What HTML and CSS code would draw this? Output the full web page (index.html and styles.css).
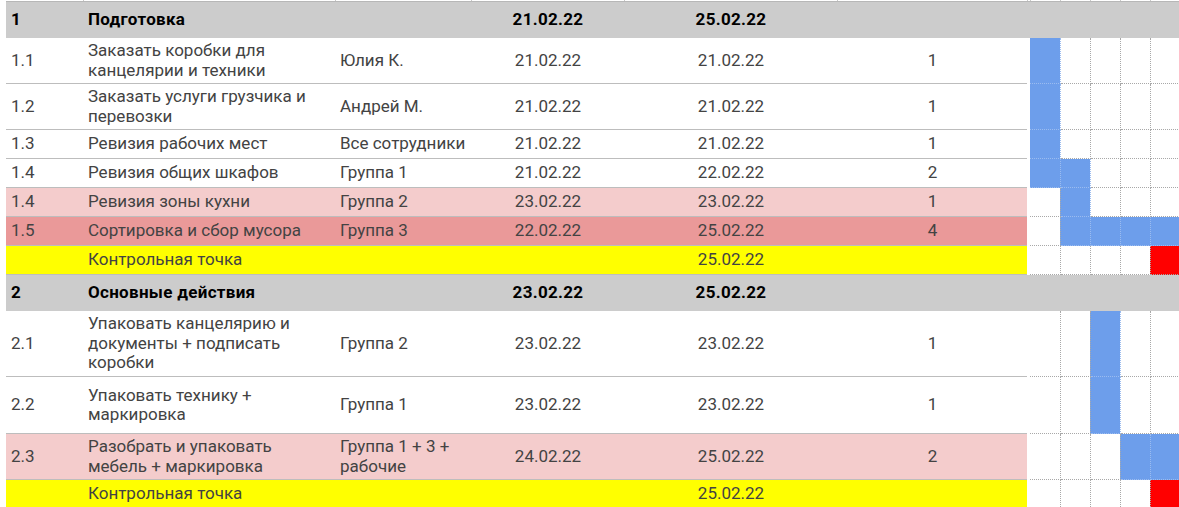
FILE: index.html
```html
<!DOCTYPE html>
<html lang="ru">
<head>
  <meta charset="UTF-8">
  <title>План переезда</title>
  <link rel="stylesheet" href="styles.css">
</head>
<body>

  <table class="plan">
    <colgroup>
      <col class="w-id">
      <col class="w-name">
      <col class="w-who">
      <col class="w-start">
      <col class="w-end">
      <col class="w-days">
      <col class="w-gap">
      <col class="w-day"><col class="w-day"><col class="w-day"><col class="w-day"><col class="w-last">
    </colgroup>

    <tr class="stub">
      <td></td><td></td><td></td><td></td><td></td><td></td><td></td>
      <td class="g"></td><td class="g"></td><td class="g"></td><td class="g"></td><td class="g"></td>
    </tr>

    <tr class="phase h36">
      <td class="id">1</td>
      <td>Подготовка</td>
      <td></td>
      <td class="num">21.02.22</td>
      <td class="num">25.02.22</td>
      <td></td>
      <td></td>
      <td class="g"></td><td class="g"></td><td class="g"></td><td class="g"></td><td class="g"></td>
    </tr>

    <tr class="task h46">
      <td class="id">1.1</td>
      <td>Заказать коробки для канцелярии и техники</td>
      <td>Юлия К.</td>
      <td class="num">21.02.22</td>
      <td class="num">21.02.22</td>
      <td class="num">1</td>
      <td class="gap"></td>
      <td class="g on"></td><td class="g"></td><td class="g"></td><td class="g"></td><td class="g"></td>
    </tr>

    <tr class="task h46">
      <td class="id">1.2</td>
      <td>Заказать услуги грузчика и перевозки</td>
      <td>Андрей М.</td>
      <td class="num">21.02.22</td>
      <td class="num">21.02.22</td>
      <td class="num">1</td>
      <td class="gap"></td>
      <td class="g on"></td><td class="g"></td><td class="g"></td><td class="g"></td><td class="g"></td>
    </tr>

    <tr class="task h29">
      <td class="id">1.3</td>
      <td>Ревизия рабочих мест</td>
      <td>Все сотрудники</td>
      <td class="num">21.02.22</td>
      <td class="num">21.02.22</td>
      <td class="num">1</td>
      <td class="gap"></td>
      <td class="g on"></td><td class="g"></td><td class="g"></td><td class="g"></td><td class="g"></td>
    </tr>

    <tr class="task h29">
      <td class="id">1.4</td>
      <td>Ревизия общих шкафов</td>
      <td>Группа 1</td>
      <td class="num">21.02.22</td>
      <td class="num">22.02.22</td>
      <td class="num">2</td>
      <td class="gap"></td>
      <td class="g on"></td><td class="g on"></td><td class="g"></td><td class="g"></td><td class="g"></td>
    </tr>

    <tr class="task risk h29">
      <td class="id">1.4</td>
      <td>Ревизия зоны кухни</td>
      <td>Группа 2</td>
      <td class="num">23.02.22</td>
      <td class="num">23.02.22</td>
      <td class="num">1</td>
      <td class="gap"></td>
      <td class="g"></td><td class="g on"></td><td class="g"></td><td class="g"></td><td class="g"></td>
    </tr>

    <tr class="task late h29">
      <td class="id">1.5</td>
      <td>Сортировка и сбор мусора</td>
      <td>Группа 3</td>
      <td class="num">22.02.22</td>
      <td class="num">25.02.22</td>
      <td class="num">4</td>
      <td class="gap"></td>
      <td class="g"></td><td class="g on"></td><td class="g on"></td><td class="g on"></td><td class="g on"></td>
    </tr>

    <tr class="task milestone h29">
      <td class="id"></td>
      <td>Контрольная точка</td>
      <td></td>
      <td></td>
      <td class="num">25.02.22</td>
      <td></td>
      <td class="gap"></td>
      <td class="g"></td><td class="g"></td><td class="g"></td><td class="g"></td><td class="g mark"></td>
    </tr>

    <tr class="phase h36">
      <td class="id">2</td>
      <td>Основные действия</td>
      <td></td>
      <td class="num">23.02.22</td>
      <td class="num">25.02.22</td>
      <td></td>
      <td></td>
      <td class="g"></td><td class="g"></td><td class="g"></td><td class="g"></td><td class="g"></td>
    </tr>

    <tr class="task h66">
      <td class="id">2.1</td>
      <td>Упаковать канцелярию и документы + подписать коробки</td>
      <td>Группа 2</td>
      <td class="num">23.02.22</td>
      <td class="num">23.02.22</td>
      <td class="num">1</td>
      <td class="gap"></td>
      <td class="g"></td><td class="g"></td><td class="g on"></td><td class="g"></td><td class="g"></td>
    </tr>

    <tr class="task h57">
      <td class="id">2.2</td>
      <td>Упаковать технику + маркировка</td>
      <td>Группа 1</td>
      <td class="num">23.02.22</td>
      <td class="num">23.02.22</td>
      <td class="num">1</td>
      <td class="gap"></td>
      <td class="g"></td><td class="g"></td><td class="g on"></td><td class="g"></td><td class="g"></td>
    </tr>

    <tr class="task risk h46">
      <td class="id">2.3</td>
      <td>Разобрать и упаковать мебель + маркировка</td>
      <td>Группа 1 + 3 + рабочие</td>
      <td class="num">24.02.22</td>
      <td class="num">25.02.22</td>
      <td class="num">2</td>
      <td class="gap"></td>
      <td class="g"></td><td class="g"></td><td class="g"></td><td class="g on"></td><td class="g on"></td>
    </tr>

    <tr class="task milestone h29">
      <td class="id"></td>
      <td>Контрольная точка</td>
      <td></td>
      <td></td>
      <td class="num">25.02.22</td>
      <td></td>
      <td class="gap"></td>
      <td class="g"></td><td class="g"></td><td class="g"></td><td class="g"></td><td class="g mark"></td>
    </tr>
  </table>

</body>
</html>
```

FILE: styles.css
```css
html, body {
  overflow: hidden;
}

body {
  margin: 0;
  padding-left: 6px;
  background-color: white;
  font-family: Roboto, "Noto Sans", sans-serif;
  font-size: 17px;
  line-height: 19.5px;
  color: #434343;
}

.plan {
  border-collapse: collapse;
  table-layout: fixed;
  width: 1173px;
}

.w-id { width: 77px; }
.w-name { width: 252px; }
.w-who { width: 136px; }
.w-start { width: 153px; }
.w-end { width: 213px; }
.w-days { width: 190px; }
.w-gap { width: 3px; }
.w-day { width: 30px; }
.w-last { width: 29px; }

td {
  padding: 0 4px 0 5px;
  vertical-align: middle;
  white-space: normal;
}

td.num {
  text-align: center;
}

/* thin line left over from the row above */
.stub td {
  height: 1px;
  padding: 0;
  border-right: 1px solid #c8c8c8;
  border-bottom: 1px solid #b7b7b7;
}

.phase td {
  background-color: #cccccc;
  color: black;
  font-weight: bold;
  letter-spacing: 0.3px;
}

.task td {
  border-bottom: 1px solid #bdbdbd;
}

.risk td {
  background-color: #f4cccc;
}

.late td {
  background-color: #ea9999;
}

.milestone td {
  background-color: #ffff00;
}

.task td.gap {
  padding: 0;
  background-color: white;
  border-bottom: none;
}

.task td.g {
  padding: 0;
  background-color: white;
  border-bottom: 1px dotted #a8a8a8;
  border-right: 1px dotted #a8a8a8;
}

.task td.g.on {
  background-color: #6d9eeb;
  border-color: #9bbcf0;
}

.task td.g.mark {
  background-color: #ff0000;
}

.phase td.g,
.phase td.gap {
  padding: 0;
}

.h29 td { height: 28px; }
.h36 td { height: 36px; }
.h46 td { height: 45px; }
.h57 td { height: 56px; }
.h66 td { height: 65px; }
```
